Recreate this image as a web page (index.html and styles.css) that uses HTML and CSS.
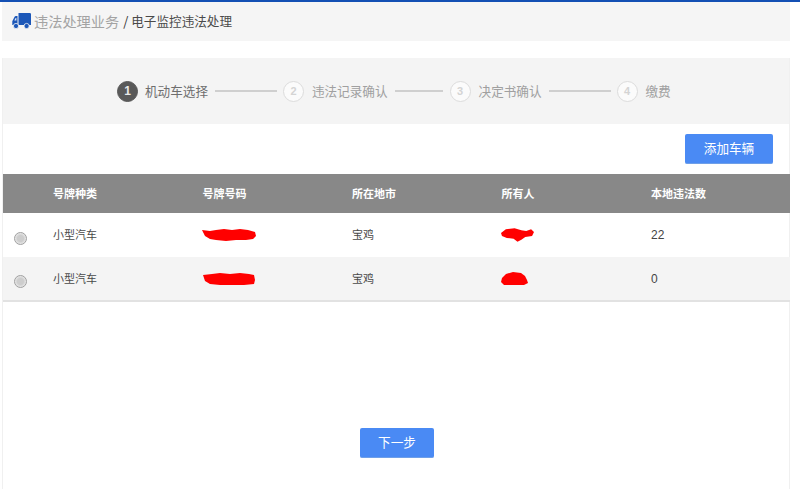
FILE: index.html
```html
<!DOCTYPE html>
<html lang="zh-CN">
<head>
<meta charset="utf-8">
<title>电子监控违法处理</title>
<link rel="stylesheet" href="styles.css">
</head>
<body>
<div class="topline"></div>
<main class="page">
  <nav class="crumb">
    <svg class="truck" width="19" height="17" viewBox="0 0 19 17"><path fill="#1c57b8" d="M6.5 1h11.3a1.2 1.2 0 0 1 1.2 1.2V13H6.5zM5.5 4V13H0.3V9.2L2.6 4.8A1.5 1.5 0 0 1 3.9 4z"/><path fill="#dfe7f5" d="M2.3 8.4 3.6 6h.8v2.4z"/><circle cx="4" cy="14" r="2.6" fill="#1c57b8" stroke="#f5f5f5" stroke-width=".8"/><circle cx="14.6" cy="14" r="2.6" fill="#1c57b8" stroke="#f5f5f5" stroke-width=".8"/></svg>
    <span class="crumb-parent">违法处理业务</span>
    <span class="crumb-sep">/</span>
    <span class="crumb-current">电子监控违法处理</span>
  </nav>

  <section class="card">
    <ol class="steps">
      <li class="step active"><span class="num">1</span><span class="label">机动车选择</span></li>
      <li class="line line-a"></li>
      <li class="step"><span class="num">2</span><span class="label">违法记录确认</span></li>
      <li class="line line-b"></li>
      <li class="step"><span class="num">3</span><span class="label">决定书确认</span></li>
      <li class="line line-a"></li>
      <li class="step"><span class="num">4</span><span class="label">缴费</span></li>
    </ol>

    <div class="toolbar"><button class="btn btn-add">添加车辆</button></div>

    <div class="table">
      <div class="row head">
        <span></span><span>号牌种类</span><span>号牌号码</span><span>所在地市</span><span>所有人</span><span>本地违法数</span>
      </div>
      <div class="row">
        <span class="radio"></span><span>小型汽车</span>
        <span><svg class="mark" width="54" height="13" viewBox="0 0 54 13"><path fill="#f00" d="M0 2 8 3 14 2 22 1 30 2 38 1 46 2 53 4 54 8 51 11 44 12 34 12 24 13 14 12 8 11 3 8z"/></svg></span>
        <span>宝鸡</span>
        <span><svg class="mark" width="33" height="15" viewBox="0 0 34 15"><path fill="#f00" d="M0 6 5 2 14 1 21 3 26 4 31 2 34 5 32 9 25 10 21 13 17 15 13 12 6 11 1 9z"/></svg></span>
        <span class="count">22</span>
      </div>
      <div class="row alt">
        <span class="radio"></span><span>小型汽车</span>
        <span><svg class="mark" width="53" height="13" viewBox="0 0 53 13"><path fill="#f00" d="M1 3 10 2 18 1 28 2 38 1 47 2 52 3 53 8 52 12 42 13 30 13 18 13 8 12 3 9z"/></svg></span>
        <span>宝鸡</span>
        <span><svg class="mark" width="27" height="13" viewBox="0 0 27 13"><path fill="#f00" d="M1 6 5 2 12 0 20 1 24 4 26 8 27 11 23 13 12 13 3 13 0 10z"/></svg></span>
        <span class="count">0</span>
      </div>
    </div>

    <div class="footer"><button class="btn btn-next">下一步</button></div>
  </section>
</main>
</body>
</html>
```
FILE: styles.css
```css
* { box-sizing: border-box; }
html, body { margin: 0; padding: 0; }
body {
  width: 800px;
  height: 489px;
  overflow: hidden;
  background: #fff;
  font-family: "Noto Sans CJK SC", "Liberation Sans", sans-serif;
  font-size: 12px;
  color: #444;
}
.topline { height: 2px; background: #1450b4; }
.page { width: 788px; margin-left: 2px; }
.crumb {
  height: 39px;
  background: #f5f5f5;
  display: flex;
  align-items: center;
  padding: 0 0 2px 10px;
  margin-bottom: 17px;
}
.truck { margin-right: 3px; }
.crumb-parent { font-size: 14.2px; color: #a3a3a3; }
.crumb-sep { font-size: 13px; color: #333; margin: 0 3px 0 4px; }
.crumb-current { font-size: 12.6px; color: #4a4a4a; }

.card {
  height: 431px;
  border-left: 1px solid #f0f0f0;
  border-right: 1px solid #f0f0f0;
}
.steps {
  list-style: none;
  margin: 0;
  height: 66px;
  padding: 0 0 0 114px;
  background: #f4f4f4;
  display: flex;
  align-items: center;
}
.step { display: flex; align-items: center; }
.num {
  width: 21px;
  height: 21px;
  border-radius: 50%;
  border: 1px solid #dcdcdc;
  background: #fbfbfb;
  color: #d4d4d4;
  font: bold 11px/19px "Liberation Sans", sans-serif;
  text-align: center;
  margin-right: 8px;
}
.active .num {
  background: #595959;
  border-color: #595959;
  color: #e8e8e8;
  font-size: 12px;
  margin-right: 7px;
}
.label { font-size: 12.6px; color: #a0a0a0; white-space: nowrap; margin-top: -2px; }
.active .label { color: #6e6e6e; }
.line { height: 2px; background: #cfcfcf; margin: 0 6px 0 7px; }
.line-a { width: 62px; }
.line-b { width: 48px; margin: 0 7px; }

.toolbar {
  height: 50px;
  display: flex;
  justify-content: flex-end;
  align-items: flex-start;
  padding: 10px 16px 0 0;
}
.btn {
  border: 0;
  border-bottom: 1px solid #6f9fe8;
  border-radius: 2px;
  background: #4a8af4;
  color: #fff;
  font-family: inherit;
  font-size: 12.6px;
  padding: 0 0 2px;
}
.btn-add { width: 88px; height: 30px; }
.btn-next { width: 74px; height: 30px; }

.table { margin-right: -1px; }
.row {
  display: grid;
  grid-template-columns: 50px repeat(5, 149.5px);
  align-items: center;
  height: 44px;
  font-size: 11px;
  color: #4a4a4a;
}
.row > span { display: flex; align-items: center; padding-bottom: 2px; }
.row > .count { font: 12px "Liberation Sans", sans-serif; color: #444; padding-bottom: 0; }
.head {
  height: 39px;
  background: #888;
  color: #fff;
  font-weight: 700;
  font-size: 11px;
}
.alt { background: #f4f4f4; border-bottom: 2px solid #e2e2e2; height: 45px; }
.row > .radio {
  width: 13px;
  height: 13px;
  padding: 0;
  margin: 6px 0 0 11px;
  border-radius: 50%;
  border: 1px solid #a0a0a0;
  background: radial-gradient(circle, #cdcdcd 0 40%, #f0f0f0 80%);
}
.mark { display: block; margin: 1px 0 0 -1px; }
.footer {
  display: flex;
  justify-content: center;
  padding: 126px 0 0 2px;
}
```
